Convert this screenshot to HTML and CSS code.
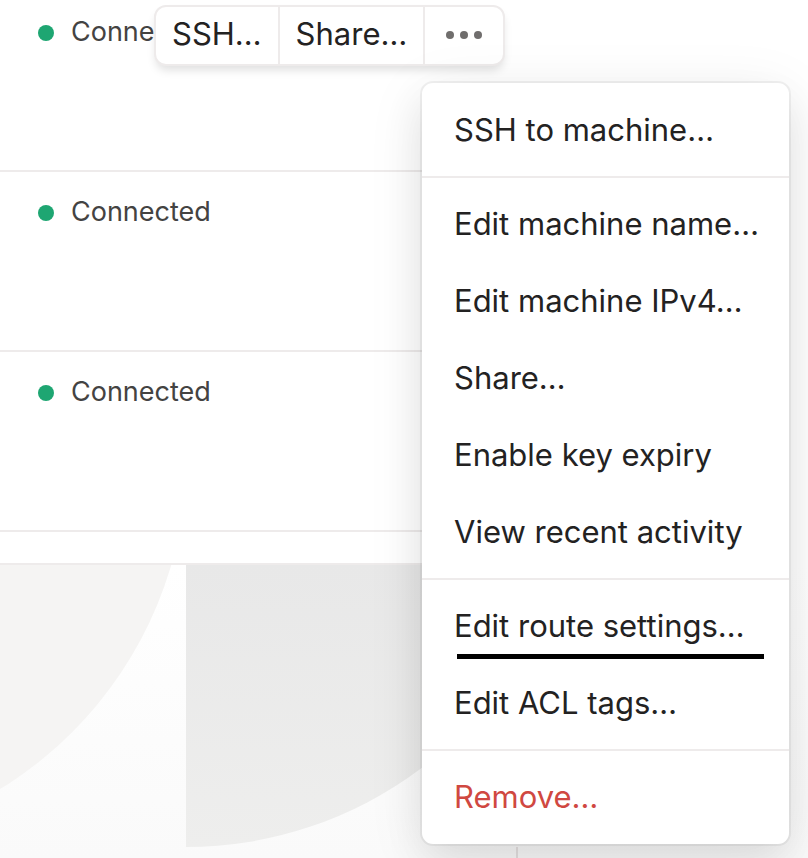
FILE: index.html
```html
<!DOCTYPE html>
<html lang="en">
<head>
<meta charset="utf-8">
<meta name="viewport" content="width=device-width, initial-scale=1">
<title>Machines</title>
<link rel="stylesheet" href="styles.css">
</head>
<body>
<main class="machines">
  <ul class="rows">
    <li class="row">
      <span class="status">Connected</span>
      <div class="toolbar">
        <button type="button" class="tool">SSH…</button>
        <button type="button" class="tool">Share…</button>
        <button type="button" class="tool tool-more" aria-label="More actions">
          <svg class="dots" viewBox="0 0 36 8" aria-hidden="true"><circle cx="4" cy="4" r="4"/><circle cx="18" cy="4" r="4"/><circle cx="32" cy="4" r="4"/></svg>
        </button>
      </div>
    </li>
    <li class="row"><span class="status">Connected</span></li>
    <li class="row"><span class="status">Connected</span></li>
  </ul>
</main>
<footer class="footer">
  <svg class="art" aria-hidden="true">
    <defs>
      <linearGradient id="dark" x1="0" y1="0" x2="0" y2="282" gradientUnits="userSpaceOnUse"><stop offset="0" stop-color="#e8e8e8"/><stop offset="1" stop-color="#eeeeed"/></linearGradient>
    </defs>
    <circle cx="-205" cy="-110" r="392" fill="#f5f4f3"/>
    <path d="M186 0V282A392 392 0 0 0 562 0Z" fill="url(#dark)"/>
    <path d="M517 282V400" stroke="#e5e1e1" stroke-width="2"/>
  </svg>
</footer>
<div class="menu" role="menu">
  <div class="group">
    <button type="button" class="item" role="menuitem">SSH to machine…</button>
  </div>
  <div class="group">
    <button type="button" class="item" role="menuitem">Edit machine name…</button>
    <button type="button" class="item" role="menuitem">Edit machine IPv4…</button>
    <button type="button" class="item" role="menuitem">Share…</button>
    <button type="button" class="item" role="menuitem">Enable key expiry</button>
    <button type="button" class="item" role="menuitem">View recent activity</button>
  </div>
  <div class="group">
    <button type="button" class="item marked" role="menuitem">Edit route settings…</button>
    <button type="button" class="item" role="menuitem">Edit ACL tags…</button>
  </div>
  <div class="group">
    <button type="button" class="item danger" role="menuitem">Remove…</button>
  </div>
</div>
</body>
</html>
```
FILE: styles.css
```css
* { box-sizing: border-box; }

body {
  position: relative;
  display: flex;
  flex-direction: column;
  min-height: 100vh;
  margin: 0;
  overflow: hidden;
  background: #fff;
  color: #232222;
  font-family: Inter, "Liberation Sans", sans-serif;
  font-size: 31px;
}

button {
  border: 0;
  background: none;
  color: inherit;
  font: inherit;
  cursor: pointer;
}

.machines {
  margin-top: -8px;
  margin-right: 60px;
  padding-bottom: 31px;
  border-bottom: 2px solid #eeebeb;
}

.rows {
  margin: 0;
  padding: 0;
  list-style: none;
}

.row {
  position: relative;
  height: 180px;
  padding: 20px 38px;
  border-bottom: 2px solid #eeebeb;
}

.status {
  display: flex;
  align-items: center;
  gap: 17px;
  color: #444342;
  font-size: 27px;
  line-height: 40px;
}

.status::before {
  content: "";
  width: 16px;
  height: 16px;
  margin-top: 2px;
  border-radius: 50%;
  background: #1ea672;
}

.toolbar {
  position: absolute;
  top: 13px;
  left: 154px;
  display: flex;
  height: 61px;
  border: 2px solid #eeebeb;
  border-radius: 12px;
  background: #fff;
  box-shadow: 0 6px 10px -2px rgba(0, 0, 0, 0.13);
}

.tool {
  display: flex;
  align-items: center;
  padding: 0 16px 4px;
}

.tool + .tool { border-left: 2px solid #eeebeb; }

.tool-more { padding: 0 21px 2px; }

.dots {
  width: 36px;
  height: 8px;
  fill: #706e6d;
}

.footer {
  flex: 1;
  display: flex;
  min-height: 290px;
  background: linear-gradient(#fff, #fafafa);
}

.art {
  flex: 1;
  width: 100%;
}

.menu {
  position: absolute;
  top: 83px;
  right: 19px;
  min-width: 367px;
  padding: 1px 0;
  border-radius: 11px;
  background: #fff;
  box-shadow:
    0 0 0 2px rgba(0, 0, 0, 0.05),
    0 20px 40px rgba(0, 0, 0, 0.08),
    0 10px 60px rgba(0, 0, 0, 0.08);
}

.group { padding: 8px 0 7px; }

.group + .group { border-top: 2px solid #eeebeb; }

.item {
  position: relative;
  display: block;
  width: 100%;
  height: 77px;
  padding: 0 30px 3px 32px;
  text-align: left;
  white-space: nowrap;
}

.danger { color: #d04841; }

.marked::after {
  content: "";
  position: absolute;
  right: 25px;
  bottom: 6px;
  left: 35px;
  height: 5px;
  background: #000;
}
```
